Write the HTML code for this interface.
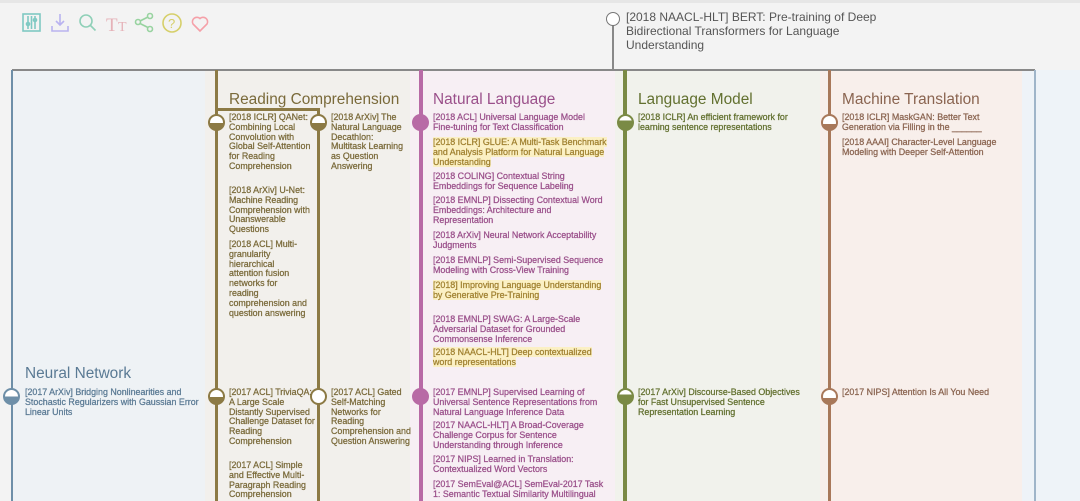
<!DOCTYPE html>
<html><head><meta charset="utf-8"><style>
*{margin:0;padding:0;box-sizing:border-box}
body{width:1080px;height:501px;overflow:hidden;background:#f3f3f3;font-family:"Liberation Sans",sans-serif;position:relative}
.a{position:absolute}
.t{position:absolute;font-size:15.4px;white-space:nowrap}
.i{position:absolute;font-size:8.9px;line-height:9.8px;font-weight:normal;-webkit-text-stroke:0.25px currentColor}
.hl{background:#fbf0c4;color:#a08030!important}
.v{position:absolute;top:70px;bottom:0}
.n{position:absolute;width:17px;height:17px;border-radius:50%;border:2.5px solid;background:#fff}
</style></head><body>
<div class="a" style="left:0;top:0;width:1080px;height:3px;background:#e6e6e6"></div>
<svg class="a" style="left:20px;top:10px" width="200" height="26" viewBox="0 0 200 26" fill="none" stroke-width="1.6">
<rect x="3" y="4" width="17" height="17" stroke="#7fc9c3"/><path d="M8 6v13M11.5 6v13M15 6v13" stroke="#7fc9c3"/><circle cx="8" cy="14" r="1.5" stroke="#7fc9c3"/><circle cx="15" cy="10" r="1.5" stroke="#7fc9c3"/>
<path d="M40 4v11M36 11l4 4 4-4M32 16v5h16v-5" stroke="#b9b3f0"/>
<circle cx="66" cy="11" r="6" stroke="#8fd0b8"/><path d="M70.5 15.5l5 5" stroke="#8fd0b8"/>
<text x="86" y="21" font-family="Liberation Serif" font-size="19" fill="#e5b2b8" stroke="none">T</text><text x="98" y="21" font-family="Liberation Serif" font-size="14" fill="#e5b2b8" stroke="none">T</text>
<circle cx="118" cy="12" r="2.5" stroke="#98d3a0"/><circle cx="130" cy="6" r="2.5" stroke="#98d3a0"/><circle cx="130" cy="19" r="2.5" stroke="#98d3a0"/><path d="M120 11l8-4M120 13.5l8 4" stroke="#98d3a0"/>
<circle cx="152" cy="13" r="9" stroke="#d6cf6a"/><text x="148" y="18" font-size="13" fill="#d6cf6a" stroke="none" font-family="Liberation Sans">?</text>
<path d="M180 21l-7-7a4.5 4.5 0 0 1 7-5.5a4.5 4.5 0 0 1 7 5.5z" stroke="#f5a0a8"/>
</svg>
<div class="a" style="left:612px;top:20px;width:2px;height:50px;background:#888"></div>
<div class="a" style="left:606px;top:12px;width:14px;height:14px;border-radius:50%;border:1.5px solid #777;background:#fff"></div>
<div class="a" style="left:626px;top:10px;font-size:12px;line-height:14px;color:#555;width:270px">[2018 NAACL-HLT] BERT: Pre-training of Deep Bidirectional Transformers for Language Understanding</div>
<div class="a" style="left:12px;top:70px;width:193px;height:431px;background:#eef2f5"></div>
<div class="a" style="left:205px;top:70px;width:205px;height:431px;background:#f2f0ec"></div>
<div class="a" style="left:410px;top:70px;width:205px;height:431px;background:#f7eff4"></div>
<div class="a" style="left:615px;top:70px;width:205px;height:431px;background:#f1f2ec"></div>
<div class="a" style="left:820px;top:70px;width:202px;height:431px;background:#f8efeb"></div>
<div class="a" style="left:1022px;top:70px;width:58px;height:431px;background:#eef3f8"></div>
<div class="a" style="left:12px;top:69px;width:1023px;height:2px;background:#888"></div>
<div class="v" style="left:11px;width:2px;background:#6e8fa8"></div>
<div class="v" style="left:1034px;width:2px;background:#9fb5c9"></div>
<div class="v" style="left:215px;width:3px;background:#8c7a45"></div>
<div class="a" style="left:215px;top:108px;width:105px;height:3px;background:#8c7a45"></div>
<div class="a" style="left:317px;top:108px;width:3px;height:393px;background:#8c7a45"></div>
<div class="v" style="left:419px;width:4px;background:#b86aa6"></div>
<div class="v" style="left:623px;width:4px;background:#7a8a45"></div>
<div class="v" style="left:828px;width:3px;background:#a8785a"></div>
<div class="t" style="left:25px;top:365px;color:#5a7a94">Neural Network</div>
<div class="t" style="left:229px;top:91px;color:#7a6a3a">Reading Comprehension</div>
<div class="t" style="left:433px;top:91px;color:#9a4f8a">Natural Language</div>
<div class="t" style="left:638px;top:91px;color:#62702f">Language Model</div>
<div class="t" style="left:842px;top:91px;color:#8a6450">Machine Translation</div>
<div class="n" style="left:3px;top:388px;border-color:#6e8fa8;background:linear-gradient(#fff 50%,#6e8fa8 50%)"></div>
<div class="n" style="left:208px;top:114px;border-color:#8c7a45;background:linear-gradient(#fff 55%,#8c7a45 55%)"></div>
<div class="n" style="left:310px;top:114px;border-color:#8c7a45;background:linear-gradient(#fff 55%,#8c7a45 55%)"></div>
<div class="n" style="left:208px;top:388px;border-color:#8c7a45;background:linear-gradient(#fff 55%,#8c7a45 55%)"></div>
<div class="n" style="left:310px;top:388px;border-color:#8c7a45"></div>
<div class="n" style="left:412px;top:114px;border-color:#b86aa6;background:#b86aa6"></div>
<div class="n" style="left:412px;top:388px;border-color:#b86aa6;background:#b86aa6"></div>
<div class="n" style="left:617px;top:114px;border-color:#7a8a45;background:linear-gradient(#fff 35%,#7a8a45 35%)"></div>
<div class="n" style="left:617px;top:388px;border-color:#7a8a45;background:linear-gradient(#fff 35%,#7a8a45 35%)"></div>
<div class="n" style="left:821px;top:114px;border-color:#a8785a;background:linear-gradient(#fff 60%,#a8785a 60%)"></div>
<div class="n" style="left:821px;top:388px;border-color:#a8785a;background:linear-gradient(#fff 60%,#a8785a 60%)"></div>
<div class="i" style="left:25px;top:388px;width:180px;color:#5a7a94">[2017 ArXiv] Bridging Nonlinearities and Stochastic Regularizers with Gaussian Error Linear Units</div>
<div class="i" style="left:229px;top:113px;width:84px;color:#7a6a3a">[2018 ICLR] QANet: Combining Local Convolution with Global Self-Attention for Reading Comprehension</div>
<div class="i" style="left:229px;top:186px;width:84px;color:#7a6a3a">[2018 ArXiv] U-Net: Machine Reading Comprehension with Unanswerable Questions</div>
<div class="i" style="left:229px;top:240px;width:80px;color:#7a6a3a">[2018 ACL] Multi-granularity hierarchical attention fusion networks for reading comprehension and question answering</div>
<div class="i" style="left:331px;top:113px;width:76px;color:#7a6a3a">[2018 ArXiv] The Natural Language Decathlon: Multitask Learning as Question Answering</div>
<div class="i" style="left:229px;top:388px;width:88px;color:#7a6a3a">[2017 ACL] TriviaQA: A Large Scale Distantly Supervised Challenge Dataset for Reading Comprehension</div>
<div class="i" style="left:229px;top:461px;width:84px;color:#7a6a3a">[2017 ACL] Simple and Effective Multi-Paragraph Reading Comprehension</div>
<div class="i" style="left:331px;top:388px;width:84px;color:#7a6a3a">[2017 ACL] Gated Self-Matching Networks for Reading Comprehension and Question Answering</div>
<div class="i" style="left:433px;top:113px;width:170px;color:#9a4f8a">[2018 ACL] Universal Language Model Fine-tuning for Text Classification</div>
<div class="i" style="left:433px;top:138px;width:180px;color:#9a4f8a"><span class="hl">[2018 ICLR] GLUE: A Multi-Task Benchmark and Analysis Platform for Natural Language Understanding</span></div>
<div class="i" style="left:433px;top:172px;width:178px;color:#9a4f8a">[2018 COLING] Contextual String Embeddings for Sequence Labeling</div>
<div class="i" style="left:433px;top:196px;width:178px;color:#9a4f8a">[2018 EMNLP] Dissecting Contextual Word Embeddings: Architecture and Representation</div>
<div class="i" style="left:433px;top:231px;width:178px;color:#9a4f8a">[2018 ArXiv] Neural Network Acceptability Judgments</div>
<div class="i" style="left:433px;top:256px;width:178px;color:#9a4f8a">[2018 EMNLP] Semi-Supervised Sequence Modeling with Cross-View Training</div>
<div class="i" style="left:433px;top:281px;width:180px;color:#9a4f8a"><span class="hl">[2018] Improving Language Understanding by Generative Pre-Training</span></div>
<div class="i" style="left:433px;top:315px;width:178px;color:#9a4f8a">[2018 EMNLP] SWAG: A Large-Scale Adversarial Dataset for Grounded Commonsense Inference</div>
<div class="i" style="left:433px;top:348px;width:178px;color:#9a4f8a"><span class="hl">[2018 NAACL-HLT] Deep contextualized word representations</span></div>
<div class="i" style="left:433px;top:388px;width:178px;color:#9a4f8a">[2017 EMNLP] Supervised Learning of Universal Sentence Representations from Natural Language Inference Data</div>
<div class="i" style="left:433px;top:421px;width:178px;color:#9a4f8a">[2017 NAACL-HLT] A Broad-Coverage Challenge Corpus for Sentence Understanding through Inference</div>
<div class="i" style="left:433px;top:455px;width:178px;color:#9a4f8a">[2017 NIPS] Learned in Translation: Contextualized Word Vectors</div>
<div class="i" style="left:433px;top:480px;width:180px;color:#9a4f8a">[2017 SemEval@ACL] SemEval-2017 Task 1: Semantic Textual Similarity Multilingual</div>
<div class="i" style="left:638px;top:113px;width:178px;color:#62702f">[2018 ICLR] An efficient framework for learning sentence representations</div>
<div class="i" style="left:638px;top:388px;width:170px;color:#62702f">[2017 ArXiv] Discourse-Based Objectives for Fast Unsupervised Sentence Representation Learning</div>
<div class="i" style="left:842px;top:113px;width:178px;color:#8a6450">[2018 ICLR] MaskGAN: Better Text Generation via Filling in the ______</div>
<div class="i" style="left:842px;top:138px;width:178px;color:#8a6450">[2018 AAAI] Character-Level Language Modeling with Deeper Self-Attention</div>
<div class="i" style="left:842px;top:388px;width:178px;color:#8a6450">[2017 NIPS] Attention Is All You Need</div>
</body></html>
